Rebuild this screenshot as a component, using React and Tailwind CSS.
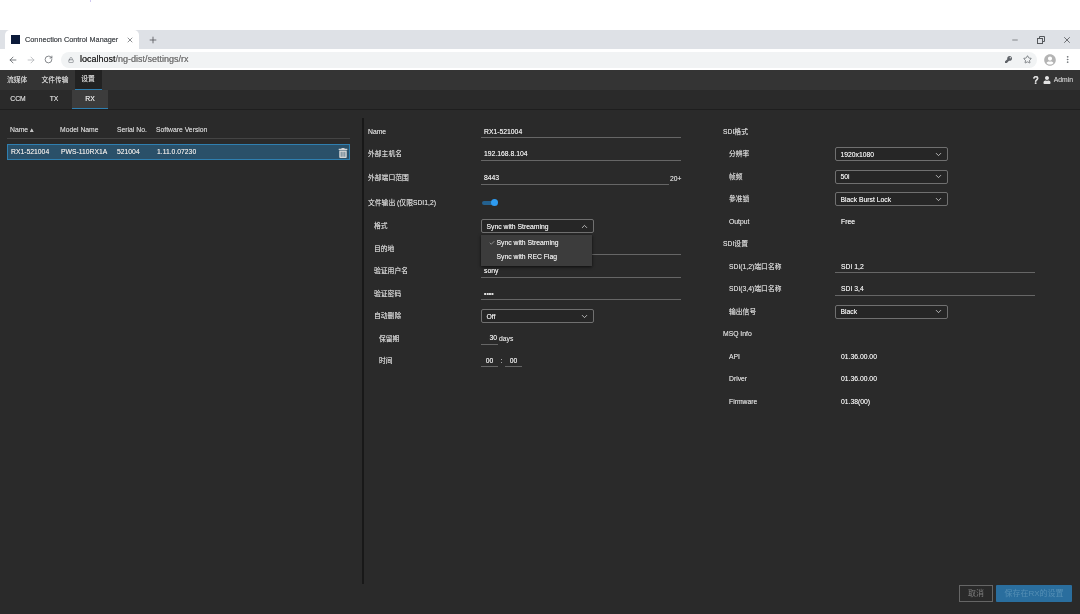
import React from 'react';
import { ArrowLeft, ArrowRight, RotateCw, Lock, Star, Plus, X, Minus, Check, ChevronDown, ChevronUp, MoreVertical } from 'lucide-react';
import { FaKey, FaTrashAlt, FaUser, FaUserCircle } from 'react-icons/fa';

const Row = ({ label, indent = 0, height = 'h-[22.5px]', children }) => (
  <div className={`flex items-center ${height}`}>
    <div className={`shrink-0 text-[#cccccc] ${indent === 2 ? 'w-[113px] pl-[11px]' : indent === 1 ? 'w-[113px] pl-[6px]' : 'w-[113px]'}`}>{label}</div>
    {children}
  </div>
);

const RightRow = ({ label, indent = true, children }) => (
  <div className="flex items-center h-[22.5px]">
    <div className={`shrink-0 w-[112px] text-[#cccccc] ${indent ? 'pl-[6px]' : ''}`}>{label}</div>
    {children}
  </div>
);

const Field = ({ value, width = 'w-[200px]', pad = 'pl-[3px]' }) => (
  <div className={`${width} ${pad} h-[13px] pt-[1px] flex items-center border-b border-[#666666] text-[#e0e0e0]`}>{value}</div>
);

const Select = ({ value, open = false }) => (
  <div className="w-[113px] h-[14px] pl-[4.5px] pr-[4px] flex items-center justify-between rounded-[2px] border border-[#707070] bg-[#262626] text-[#e0e0e0]">
    <span className="pt-[1px]">{value}</span>
    {open ? <ChevronUp size={9} /> : <ChevronDown size={9} />}
  </div>
);

export default function App() {
  return (
    <div className="w-[1080px] h-[614px] flex flex-col overflow-hidden bg-[#2a2a2a] text-[6.8px] blur-[0.3px] [text-shadow:0_0_0.6px_currentColor] font-['Liberation_Sans','Noto_Sans_CJK_SC',sans-serif]">
      <div className="h-[30px] bg-white shrink-0">
        <div className="ml-[90px] w-[1px] h-[2px] bg-[#cfc8f0]"></div>
      </div>

      <div className="h-[19px] shrink-0 bg-[#dee1e6] flex items-end text-[#55585c]">
        <div className="ml-[5px] w-[134px] h-[19px] bg-white rounded-t-[5px] flex items-center pl-[6px] pr-[5px]">
          <div className="w-[9px] h-[9px] bg-[#0b1a3a] mr-[5px]"></div>
          <span className="flex-1 pt-[1px] text-[7.3px] whitespace-nowrap">Connection Control Manager</span>
          <X size={8} />
        </div>
        <div className="ml-[9px] h-[19px] flex items-center"><Plus size={10} /></div>
        <div className="ml-auto h-[19px] flex items-center text-[#55585c]">
          <Minus size={8} />
          <svg width="8" height="8" viewBox="0 0 8 8" fill="none" stroke="currentColor" className="ml-[18px]">
            <rect x="0.5" y="2.5" width="5" height="5" />
            <path d="M2.5 2.5V0.5H7.5V5.5H5.5" />
          </svg>
          <X size={10} className="ml-[17px] mr-[8px]" />
        </div>
      </div>

      <div className="h-[21px] shrink-0 bg-white flex items-center text-[#5f6368]">
        <div className="w-[61px] pl-[8px] flex items-center gap-[8px]">
          <ArrowLeft size={10} />
          <ArrowRight size={10} className="text-[#b5b7ba]" />
          <RotateCw size={9} />
        </div>
        <div className="w-[976px] h-[16px] rounded-full bg-[#f1f3f4] flex items-center pl-[7px] pr-[5px] text-[9px]">
          <Lock size={6} className="mr-[6px]" />
          <span className="text-[#2e2e2e]">localhost</span>
          <span className="text-[#777777]">/ng-dist/settings/rx</span>
          <div className="ml-auto flex items-center gap-[11px]">
            <FaKey size={7} />
            <Star size={9} />
          </div>
        </div>
        <FaUserCircle size={12} className="ml-[7px] text-[#b4b4b4]" />
        <MoreVertical size={9} className="ml-[7px]" />
      </div>

      <div className="h-[20px] shrink-0 bg-[#343434] flex items-stretch text-[#cccccc] pl-[7px]">
        <div className="flex items-center mr-[14px]">流媒体</div>
        <div className="flex items-center mr-[6px]">文件传输</div>
        <div className="w-[27px] flex items-center justify-center bg-[#222222] border-b border-[#2f7fb0]">设置</div>
        <div className="ml-auto mr-[7px] flex items-center text-[#bcbcbc]">
          <span className="text-[10px] font-bold text-[#dddddd] mr-[4px]">?</span>
          <FaUser size={8} className="text-[#e4e4e4] mr-[3px]" />
          <span>Admin</span>
        </div>
      </div>

      <div className="h-[20px] shrink-0 bg-[#2a2a2a] flex items-stretch border-b border-[#1e1e1e] text-[#cccccc]">
        <div className="w-[36px] flex items-center justify-center">CCM</div>
        <div className="w-[36px] flex items-center justify-center">TX</div>
        <div className="w-[36px] flex items-center justify-center bg-[#3c3c3c] border-b border-[#2f7fb0] text-[#e0e0e0]">RX</div>
      </div>

      <div className="flex-1 flex min-h-0 relative">
        <div className="w-[364px] shrink-0 h-[466px] mt-[8px] pl-[7px] pr-[12px] border-r-2 border-[#181818]">
          <div className="h-[18px] mt-[3px] pt-[2px] flex items-center border-b border-[#444444] text-[#c4c4c4]">
            <div className="w-[53px] pl-[3px]">Name ▴</div>
            <div className="w-[57px]">Model Name</div>
            <div className="w-[39px]">Serial No.</div>
            <div>Software Version</div>
          </div>
          <div className="h-[16px] mt-[5px] pt-[1px] flex items-center border border-[#2f7fb0] bg-[#2a5069] text-[#dcdcdc]">
            <div className="w-[53px] pl-[3px]">RX1-521004</div>
            <div className="w-[56px]">PWS-110RX1A</div>
            <div className="w-[40px]">521004</div>
            <div className="flex-1">1.11.0.07230</div>
            <FaTrashAlt size={10} className="mr-[1px] text-[#d4d4d4]" />
          </div>
        </div>

        <div className="w-[359px] shrink-0 pt-[10.5px] pl-[4px]">
          <Row label="Name"><Field value="RX1-521004" /></Row>
          <Row label="外部主机名"><Field value="192.168.8.104" /></Row>
          <Row label="外部端口范围" height="h-[25px]">
            <Field value="8443" width="w-[188px]" />
            <span className="ml-[1px] mt-[3px] text-[#cccccc]">20+</span>
          </Row>
          <Row label="文件输出 (仅限SDI1,2)" height="h-[24.5px]">
            <div className="relative w-[15px] h-[4px] rounded-full bg-[#24618f] ml-[1px]">
              <div className="absolute right-[-1px] top-[-1.5px] w-[7px] h-[7px] rounded-full bg-[#2e9bf0]"></div>
            </div>
          </Row>
          <Row label="格式" indent={1}>
            <div className="relative">
              <Select value="Sync with Streaming" open />
              <div className="absolute left-0 top-[15.5px] w-[111px] h-[31px] bg-[#3c3c3c] shadow-[0_1px_3px_rgba(0,0,0,0.7)] text-[#e0e0e0] z-10">
                <div className="h-[15px] mt-[1px] flex items-center">
                  <span className="w-[15.5px] flex justify-end pr-[2px]"><Check size={6} /></span>
                  <span>Sync with Streaming</span>
                </div>
                <div className="h-[13px] flex items-center pl-[15.5px]">Sync with REC Flag</div>
              </div>
            </div>
          </Row>
          <Row label="目的地" indent={1}><Field value="" /></Row>
          <Row label="验证用户名" indent={1}><Field value="sony" /></Row>
          <Row label="验证密码" indent={1}><Field value="••••" /></Row>
          <Row label="自动删除" indent={1}><Select value="Off" /></Row>
          <Row label="保留期" indent={2}>
            <div className="w-[17px] h-[12px] flex items-center justify-end pr-[1px] border-b border-[#666666] text-[#e0e0e0]">30</div>
            <span className="ml-[1px] text-[#cccccc]">days</span>
          </Row>
          <Row label="时间" indent={2}>
            <div className="w-[17px] h-[12px] flex items-center justify-center border-b border-[#666666] text-[#e0e0e0]">00</div>
            <span className="w-[7px] text-center text-[#cccccc]">:</span>
            <div className="w-[17px] h-[12px] flex items-center justify-center border-b border-[#666666] text-[#e0e0e0]">00</div>
          </Row>
        </div>

        <div className="flex-1 pt-[10.5px]">
          <RightRow label="SDI格式" indent={false} />
          <RightRow label="分辨率"><Select value="1920x1080" /></RightRow>
          <RightRow label="帧频"><Select value="50i" /></RightRow>
          <RightRow label="參准锁"><Select value="Black Burst Lock" /></RightRow>
          <RightRow label="Output"><span className="pl-[6px] text-[#e0e0e0]">Free</span></RightRow>
          <RightRow label="SDI设置" indent={false} />
          <RightRow label="SDI(1,2)端口名称"><Field value="SDI 1,2" pad="pl-[6px]" /></RightRow>
          <RightRow label="SDI(3,4)端口名称"><Field value="SDI 3,4" pad="pl-[6px]" /></RightRow>
          <RightRow label="输出信号"><Select value="Black" /></RightRow>
          <RightRow label="MSQ Info" indent={false} />
          <RightRow label="API"><span className="pl-[6px] text-[#e0e0e0]">01.36.00.00</span></RightRow>
          <RightRow label="Driver"><span className="pl-[6px] text-[#e0e0e0]">01.36.00.00</span></RightRow>
          <RightRow label="Firmware"><span className="pl-[6px] text-[#e0e0e0]">01.38(00)</span></RightRow>
        </div>

        <div className="absolute right-[8px] bottom-[12px] flex items-center gap-[3px]">
          <button className="w-[34px] h-[17px] border border-[#666666] text-[#7e7e7e] text-[8px]">取消</button>
          <button className="w-[76px] h-[17px] rounded-[1px] bg-[#2a6e9e] text-[#558fb5] text-[8px]">保存在RX的设置</button>
        </div>
      </div>
    </div>
  );
}
